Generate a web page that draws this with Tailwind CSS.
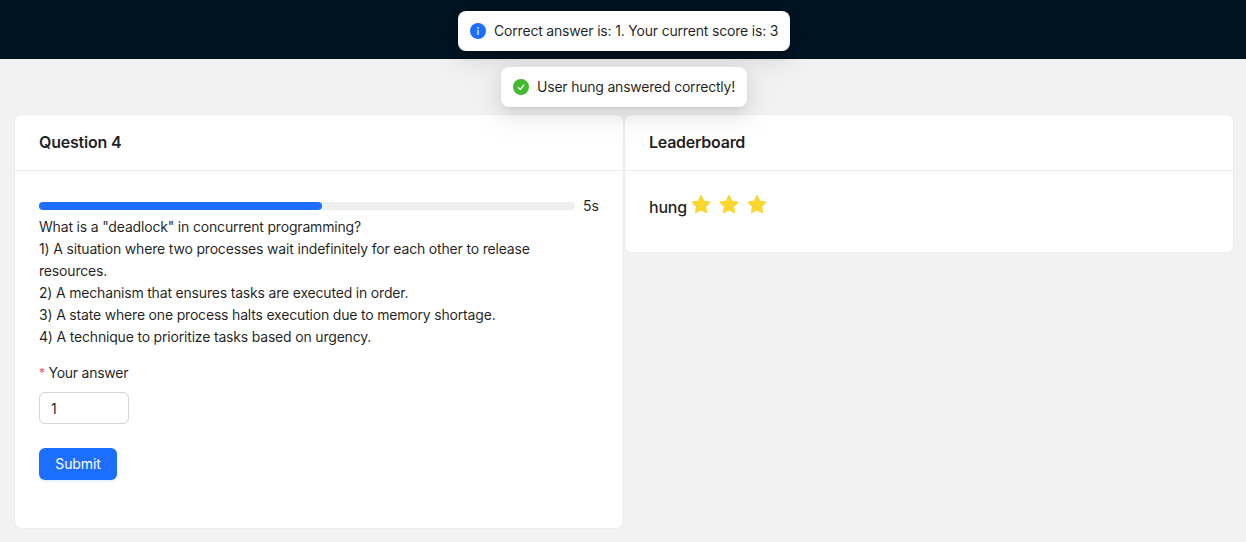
<!DOCTYPE html>
<html lang="en">
<head>
<meta charset="utf-8">
<title>Quiz</title>
<script src="https://cdn.jsdelivr.net/npm/@tailwindcss/browser@4"></script>
</head>
<body class="h-[542px] overflow-hidden bg-[#f2f2f2] font-['Inter',sans-serif] text-sm leading-[22px] text-black/88">
<header class="h-[59px] bg-[#001421]"></header>
<main class="flex items-start px-[14px] pr-3 pt-[55px]">
  <section class="h-[415px] w-[610px] rounded-lg border border-[#ededed] bg-white">
    <h2 class="flex h-14 items-center border-b border-[#ededed] px-6 pb-0.5 text-base font-semibold tracking-[-0.2px]">Question 4</h2>
    <div class="p-6">
      <div class="flex h-[22px] items-center gap-2">
        <div class="h-2 w-[536px] rounded-full bg-[#efefef]"><div class="h-2 w-[283px] rounded-full bg-[#1c6eff]"></div></div>
        <span>5s</span>
      </div>
      <div class="-mt-px whitespace-nowrap tracking-[-0.175px]">
        <p>What is a "deadlock" in concurrent programming?</p>
        <p>1) A situation where two processes wait indefinitely for each other to release</p>
        <p>resources.</p>
        <p class="tracking-[-0.185px]">2) A mechanism that ensures tasks are executed in order.</p>
        <p class="tracking-[-0.185px]">3) A state where one process halts execution due to memory shortage.</p>
        <p class="tracking-[-0.185px]">4) A technique to prioritize tasks based on urgency.</p>
      </div>
      <label for="answer" class="mt-[14px] flex h-[22px] items-center tracking-[-0.25px]"><span class="mr-1 w-[5.5px] text-xs leading-none text-[#ff4d4f]">*</span>Your answer</label>
      <input id="answer" value="1" class="mt-2 block h-8 w-[90px] rounded-md border border-[#d5d5d5] bg-white px-[11px] outline-none">
      <button class="mt-6 block h-8 w-[78px] rounded-md bg-[#1c6eff] tracking-[-0.1px] text-white shadow-[0_2px_0_rgba(5,145,255,0.1)]">Submit</button>
    </div>
  </section>
  <section class="h-[139px] w-[610px] rounded-lg border border-[#ededed] bg-white">
    <h2 class="flex h-14 items-center border-b border-[#ededed] px-6 pb-0.5 text-base font-semibold tracking-[-0.26px]">Leaderboard</h2>
    <div class="flex p-6 pt-[23px]">
      <span class="mr-[3px] w-[39px] pt-px text-base font-medium leading-6 tracking-[-0.2px]">hung</span>
      <div class="flex gap-2 pt-px">
        <svg class="size-5 fill-[#f9d72f]" viewBox="64 64 896 896"><path d="M908.1 353.1l-253.9-36.9L540.7 86.1c-3.1-6.3-8.2-11.4-14.5-14.5-15.8-7.8-35-1.3-42.9 14.5L369.8 316.2l-253.9 36.9c-7 1-13.4 4.3-18.3 9.3a32.05 32.05 0 00.6 45.3l183.7 179.1-43.4 252.9a31.95 31.95 0 0046.4 33.7L512 754l227.1 119.4c6.2 3.3 13.4 4.4 20.3 3.2 17.4-3 29.1-19.5 26.1-36.9l-43.4-252.9 183.7-179.1c5-4.9 8.3-11.3 9.3-18.3 2.7-17.5-9.5-33.7-27-36.3z"/></svg>
        <svg class="size-5 fill-[#f9d72f]" viewBox="64 64 896 896"><path d="M908.1 353.1l-253.9-36.9L540.7 86.1c-3.1-6.3-8.2-11.4-14.5-14.5-15.8-7.8-35-1.3-42.9 14.5L369.8 316.2l-253.9 36.9c-7 1-13.4 4.3-18.3 9.3a32.05 32.05 0 00.6 45.3l183.7 179.1-43.4 252.9a31.95 31.95 0 0046.4 33.7L512 754l227.1 119.4c6.2 3.3 13.4 4.4 20.3 3.2 17.4-3 29.1-19.5 26.1-36.9l-43.4-252.9 183.7-179.1c5-4.9 8.3-11.3 9.3-18.3 2.7-17.5-9.5-33.7-27-36.3z"/></svg>
        <svg class="size-5 fill-[#f9d72f]" viewBox="64 64 896 896"><path d="M908.1 353.1l-253.9-36.9L540.7 86.1c-3.1-6.3-8.2-11.4-14.5-14.5-15.8-7.8-35-1.3-42.9 14.5L369.8 316.2l-253.9 36.9c-7 1-13.4 4.3-18.3 9.3a32.05 32.05 0 00.6 45.3l183.7 179.1-43.4 252.9a31.95 31.95 0 0046.4 33.7L512 754l227.1 119.4c6.2 3.3 13.4 4.4 20.3 3.2 17.4-3 29.1-19.5 26.1-36.9l-43.4-252.9 183.7-179.1c5-4.9 8.3-11.3 9.3-18.3 2.7-17.5-9.5-33.7-27-36.3z"/></svg>
      </div>
    </div>
  </section>
</main>
<div class="absolute inset-x-0 top-[11px] flex flex-col items-center gap-4 pl-[2px]">
  <div class="flex h-10 w-[332px] items-center gap-2 whitespace-nowrap rounded-lg bg-white px-3 shadow-[0_6px_16px_0_rgba(0,0,0,0.08),0_3px_6px_-4px_rgba(0,0,0,0.12),0_9px_28px_8px_rgba(0,0,0,0.05)]">
    <svg class="size-4 shrink-0" viewBox="0 0 16 16"><circle cx="8" cy="8" r="8" fill="#1c6eff"/><path d="M7.4 6.9h1.2v5H7.4z" fill="#fff"/><circle cx="8" cy="4.9" r=".9" fill="#fff"/></svg>
    <span class="tracking-[-0.185px]">Correct answer is: 1. Your current score is: 3</span>
  </div>
  <div class="flex h-10 w-[246px] items-center gap-2 whitespace-nowrap rounded-lg bg-white px-3 shadow-[0_6px_16px_0_rgba(0,0,0,0.08),0_3px_6px_-4px_rgba(0,0,0,0.12),0_9px_28px_8px_rgba(0,0,0,0.05)]">
    <svg class="size-4 shrink-0" viewBox="0 0 16 16"><circle cx="8" cy="8" r="8" fill="#42ba2d"/><path d="M5 8.1l2.2 2.5 3.9-5" fill="none" stroke="#fff" stroke-width="1.3"/></svg>
    <span class="tracking-[-0.21px]">User hung answered correctly!</span>
  </div>
</div>
</body>
</html>
